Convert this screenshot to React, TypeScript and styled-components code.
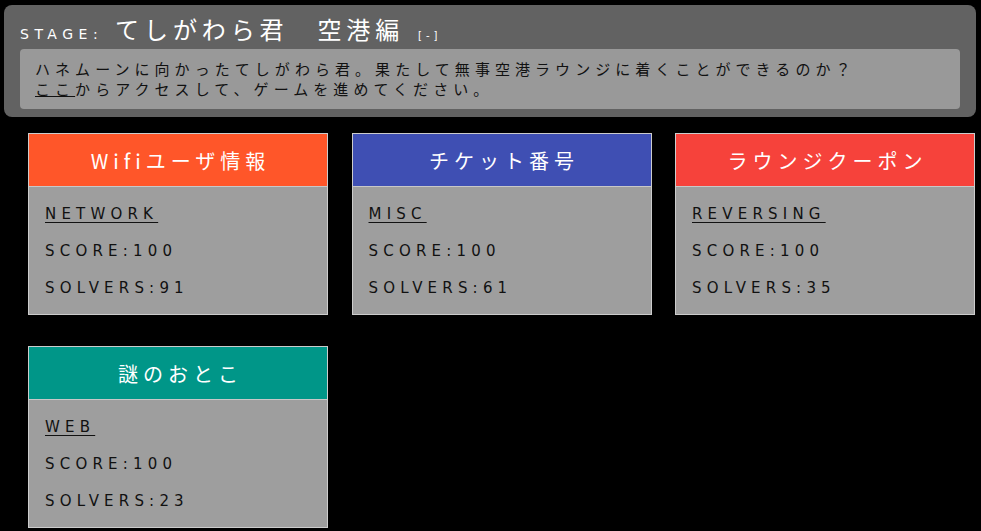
import styled, { createGlobalStyle } from "styled-components";

const GlobalStyle = createGlobalStyle`
    html, body {
        margin: 0;
        padding: 0;
        background: #000000;
    }

    body {
        font-family: "DejaVu Sans", "Noto Sans CJK JP", sans-serif;
    }
`;

const Page = styled.div`
    padding: 5px 5px 0 4px;
`;

const StagePanel = styled.section`
    background: #626262;
    border-radius: 8px;
    padding: 0 16px 8px 16px;
`;

const StageHeading = styled.div`
    display: flex;
    align-items: baseline;
    height: 44px;
`;

const StageLabel = styled.span`
    color: #ffffff;
    font-size: 14px;
    letter-spacing: 5.5px;
    margin-right: 12px;
`;

const StageTitle = styled.h1`
    margin: 0;
    color: #ffffff;
    font-weight: 400;
    font-size: 24px;
    line-height: 47px;
    letter-spacing: 4.9px;
    font-family: "Noto Sans CJK JP", sans-serif;
`;

const ToggleLink = styled.span`
    color: #ffffff;
    font-size: 10px;
    margin-left: 14px;
    letter-spacing: 4px;
`;

const StageText = styled.p`
    margin: 0;
    background: #999999;
    border-radius: 4px;
    padding: 10px 15px;
    color: #111111;
    font-size: 15px;
    line-height: 20px;
    letter-spacing: 5.05px;
    font-family: "Noto Sans CJK JP", sans-serif;

    a {
        color: #111111;
        text-decoration: underline;
    }
`;

const Board = styled.div`
    display: grid;
    grid-template-columns: repeat(3, 300px);
    column-gap: 23.5px;
    row-gap: 31px;
    padding: 16px 0 0 24px;
`;

const Card = styled.article`
    border: 1px solid #cccccc;
    background: #9e9e9e;
`;

const CardHead = styled.header<{ $color: string }>`
    background: ${(p) => p.$color};
    height: 52px;
    border-bottom: 1px solid #c8c8c8;
    display: flex;
    align-items: center;
    justify-content: center;
    color: #ffffff;
    font-size: 20px;
    letter-spacing: 5px;
    padding-left: 5px;
    font-family: "Noto Sans CJK JP", sans-serif;
`;

const CardBody = styled.div`
    padding: 9px 16px 7px 16px;
`;

const CardLine = styled.div`
    line-height: 37px;
    font-size: 15px;
    letter-spacing: 5.2px;
    color: #111111;

    a {
        color: #111111;
        text-decoration: underline;
        text-underline-offset: 3px;
    }
`;

type Challenge = {
    title: string;
    category: string;
    score: number;
    solvers: number;
    color: string;
};

const challenges: Challenge[] = [
    { title: "Wifiユーザ情報", category: "NETWORK", score: 100, solvers: 91, color: "#ff5629" },
    { title: "チケット番号", category: "MISC", score: 100, solvers: 61, color: "#3f4fb3" },
    { title: "ラウンジクーポン", category: "REVERSING", score: 100, solvers: 35, color: "#f6423b" },
    { title: "謎のおとこ", category: "WEB", score: 100, solvers: 23, color: "#009688" },
];

function App() {
    return (
        <>
            <GlobalStyle />
            <Page>
                <StagePanel>
                    <StageHeading>
                        <StageLabel>STAGE:</StageLabel>
                        <StageTitle>てしがわら君　空港編</StageTitle>
                        <ToggleLink>[-]</ToggleLink>
                    </StageHeading>
                    <StageText>
                        ハネムーンに向かったてしがわら君。果たして無事空港ラウンジに着くことができるのか？
                        <br />
                        <a href="#">ここ</a>からアクセスして、ゲームを進めてください。
                    </StageText>
                </StagePanel>
                <Board>
                    {challenges.map((c) => (
                        <Card key={c.title}>
                            <CardHead $color={c.color}>{c.title}</CardHead>
                            <CardBody>
                                <CardLine>
                                    <a href="#">{c.category}</a>
                                </CardLine>
                                <CardLine>SCORE:{c.score}</CardLine>
                                <CardLine>SOLVERS:{c.solvers}</CardLine>
                            </CardBody>
                        </Card>
                    ))}
                </Board>
            </Page>
        </>
    );
}

export default App;
